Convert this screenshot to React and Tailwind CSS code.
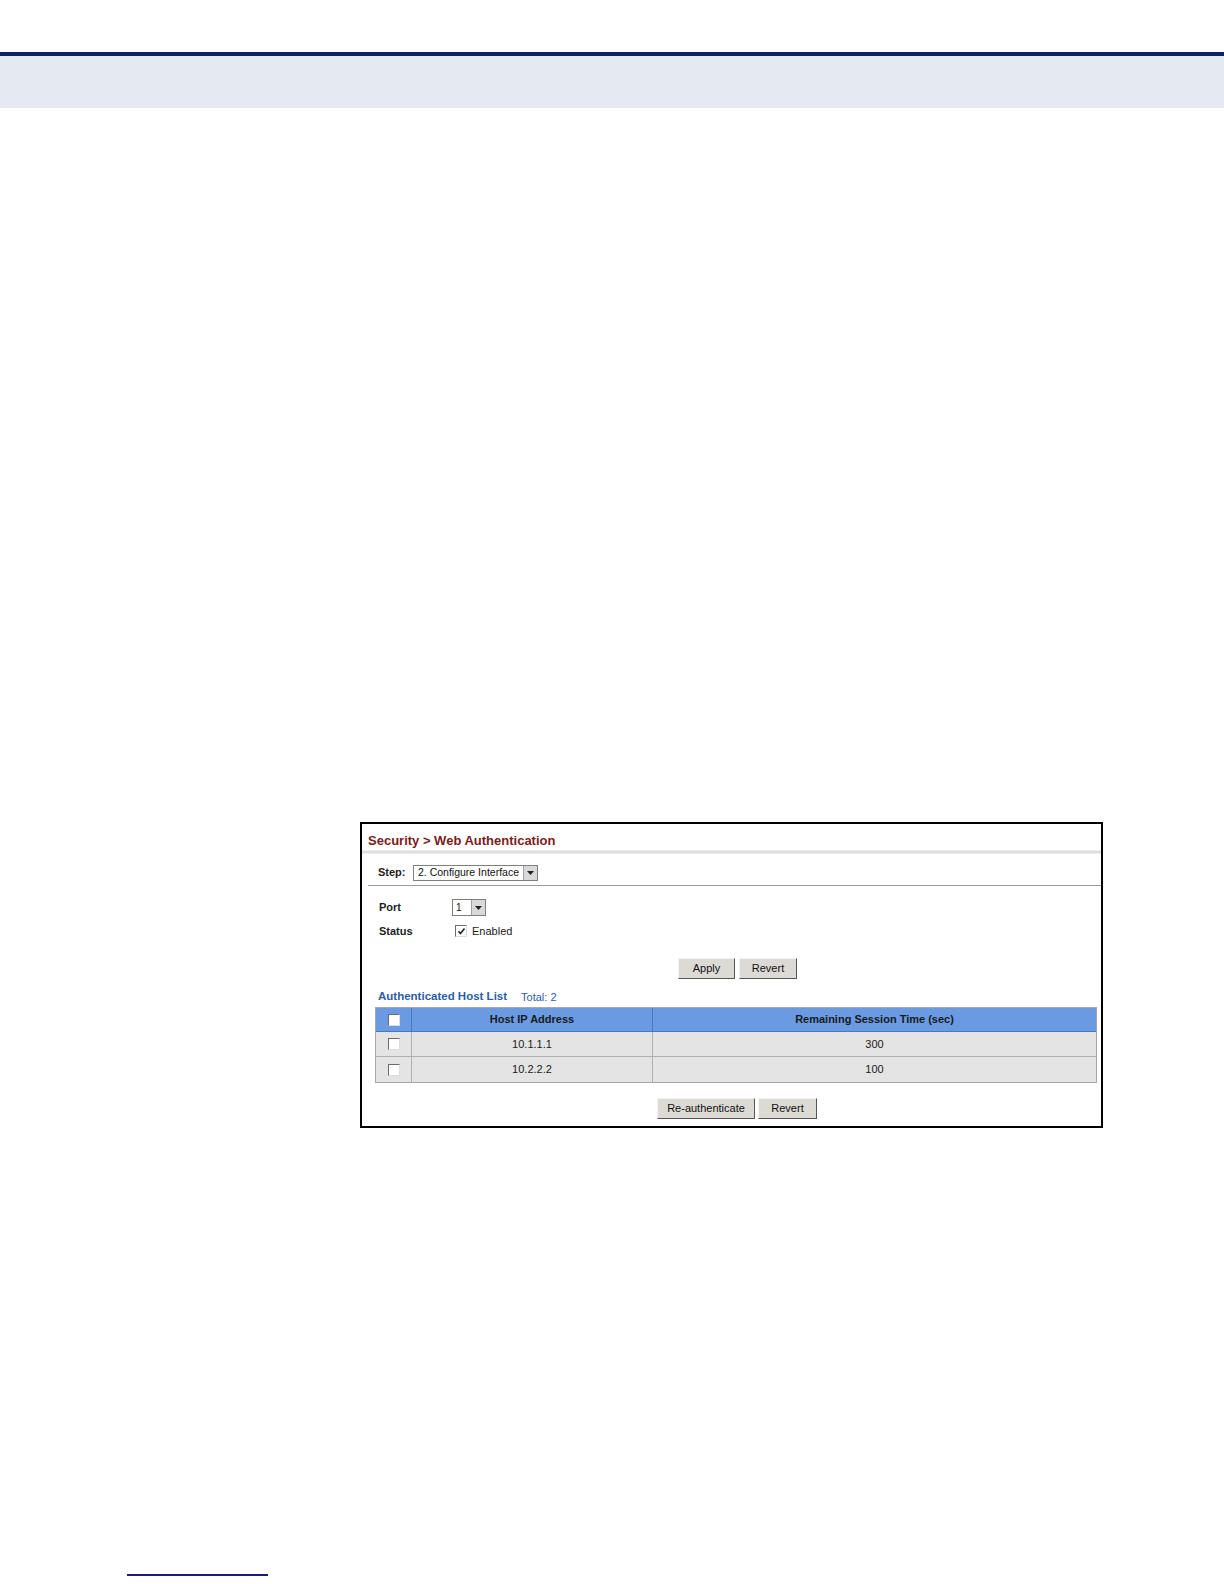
import React from 'react';

function Check({ checked }) {
  return (
    <span className="inline-flex w-[12px] h-[12px] bg-white border border-t-[#6b6b6b] border-l-[#6b6b6b] border-r-[#dcdcdc] border-b-[#dcdcdc] items-center justify-center">
      {checked && (
        <svg width="9" height="9" viewBox="0 0 9 9">
          <path d="M1.5 4.2 L3.5 6.5 L7.5 1.5" stroke="#222" strokeWidth="1.6" fill="none" />
        </svg>
      )}
    </span>
  );
}

function Arrow() {
  return (
    <span className="flex w-[14px] h-full bg-[#d9d9d9] border-l border-[#a0a0a0] items-center justify-center">
      <svg width="7" height="4" viewBox="0 0 7 4">
        <path d="M0 0 L7 0 L3.5 4 Z" fill="#222" />
      </svg>
    </span>
  );
}

function Btn({ children, w }) {
  return (
    <button className={`h-[21px] ${w} bg-[#dcdad5] border border-t-[#f4f4f4] border-l-[#f4f4f4] border-r-[#555] border-b-[#555] text-[11px] text-[#111]`}>
      {children}
    </button>
  );
}

export default function App() {
  const rows = [
    ['10.1.1.1', '300'],
    ['10.2.2.2', '100'],
  ];
  return (
    <div className="w-full h-[1584px] overflow-hidden bg-white relative" style={{ fontFamily: '"Liberation Sans", Arial, sans-serif' }}>
      <div className="h-[52px]" />
      <div className="h-[4px] bg-[#0b2461]" />
      <div className="h-[52px] bg-[#e5e9f1]" />

      <div className="pt-[714px] pl-[360px]">
        <div className="w-[743px] border-2 border-black flex flex-col pb-[7px]">
          <div className="pl-[6px] pt-[8px] h-[26px] text-[13px] font-bold text-[#7b1c1c] leading-[18px]">
            Security &gt; Web Authentication
          </div>
          <div className="h-[4px] bg-gradient-to-b from-[#f2f2f2] via-[#d9d9d9] to-[#f2f2f2]" />
          <div className="flex items-center h-[28px] pl-[16px] pt-[9px]">
            <span className="text-[11px] font-bold text-[#222] w-[35px]">Step:</span>
            <div className="flex h-[16px] w-[125px] border border-[#7f7f7f] items-center">
              <span className="flex-1 pl-[4px] text-[10.5px] text-[#111]">2. Configure Interface</span>
              <Arrow />
            </div>
          </div>
          <div className="ml-[6px] h-[1px] bg-[#9a9a9a] mt-[3px]" />
          <div className="flex items-center h-[17px] mt-[13px] pl-[17px]">
            <span className="text-[11px] font-bold text-[#222] w-[73px]">Port</span>
            <div className="flex h-[17px] w-[34px] border border-[#7f7f7f] items-center">
              <span className="flex-1 pl-[3px] text-[10px] text-[#111]">1</span>
              <Arrow />
            </div>
          </div>
          <div className="flex items-center h-[16px] mt-[7px] pl-[17px]">
            <span className="text-[11px] font-bold text-[#222] w-[76px]">Status</span>
            <Check checked />
            <span className="ml-[5px] text-[11px] text-[#222]">Enabled</span>
          </div>
          <div className="flex gap-[4px] mt-[19px] pl-[316px]">
            <Btn w="w-[57px]">Apply</Btn>
            <Btn w="w-[58px]">Revert</Btn>
          </div>
          <div className="flex items-end mt-[10px] pl-[16px] h-[16px]">
            <span className="text-[11.5px] font-bold text-[#2d5da8]">Authenticated Host List</span>
            <span className="ml-[14px] text-[11px] text-[#2d5da8]">Total: 2</span>
          </div>
          <div className="ml-[13px] mt-[2px] w-[722px] border border-[#a8a8a8]">
            <div className="flex h-[24px] bg-[#6a9be2] border-b border-[#4a78c0]">
              <div className="w-[36px] flex items-center justify-center border-r border-[#4a78c0]"><Check /></div>
              <div className="w-[241px] flex items-center justify-center border-r border-[#4a78c0] text-[11px] font-bold text-[#1a1a1a]">Host IP Address</div>
              <div className="flex-1 flex items-center justify-center text-[11px] font-bold text-[#1a1a1a]">Remaining Session Time (sec)</div>
            </div>
            {rows.map((r, i) => (
              <div key={r[0]} className={`flex h-[25px] bg-[#e4e4e4] ${i === 0 ? 'border-b border-[#b0b0b0]' : ''}`}>
                <div className="w-[36px] flex items-center justify-center border-r border-[#b0b0b0]"><Check /></div>
                <div className="w-[241px] flex items-center justify-center border-r border-[#b0b0b0] text-[11px] text-[#1a1a1a]">{r[0]}</div>
                <div className="flex-1 flex items-center justify-center text-[11px] text-[#1a1a1a]">{r[1]}</div>
              </div>
            ))}
          </div>
          <div className="flex gap-[3px] mt-[15px] pl-[295px]">
            <Btn w="w-[98px]">Re-authenticate</Btn>
            <Btn w="w-[59px]">Revert</Btn>
          </div>
        </div>
      </div>

      <div className="absolute left-[127px] top-[1574px] w-[141px] h-[2px] bg-[#1a1a80]" />
    </div>
  );
}
